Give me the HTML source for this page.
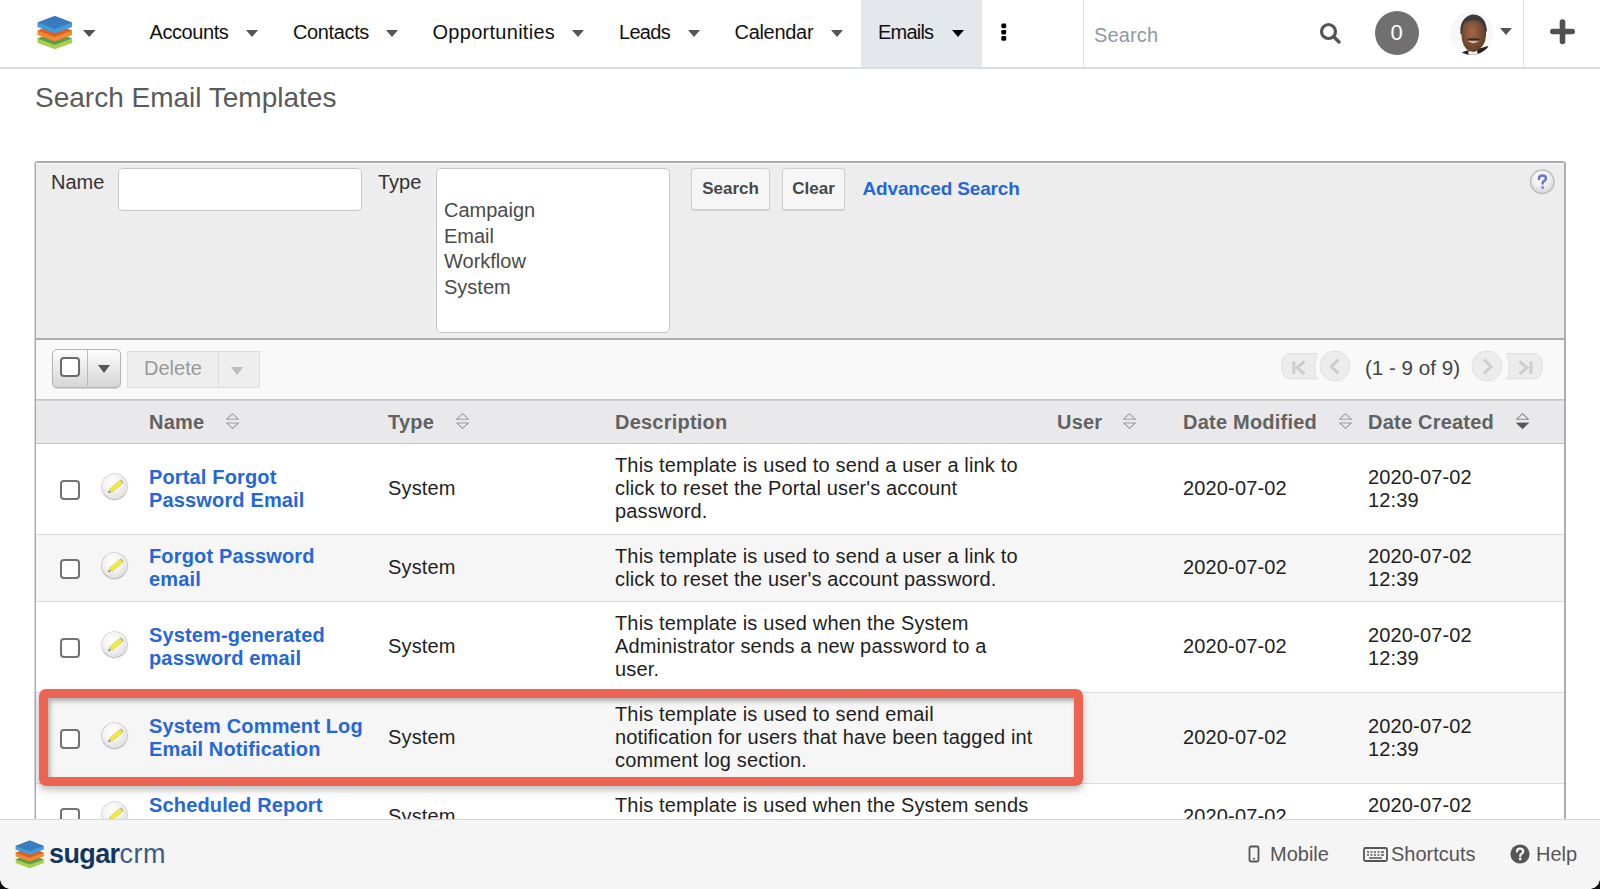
<!DOCTYPE html>
<html><head><meta charset="utf-8">
<style>
*{box-sizing:border-box}
html,body{margin:0;padding:0}
body{width:1600px;height:889px;overflow:hidden;position:relative;background:#fff;font-family:"Liberation Sans",sans-serif;color:#000}
.a{position:absolute;white-space:nowrap}
.nav{position:absolute;left:0;top:0;width:1600px;height:69px;background:#fff;border-bottom:2px solid #d7dde2}
.ni{position:absolute;top:21px;font-size:20px;color:#111;line-height:23px}
.car{position:absolute;width:0;height:0;border-left:6.5px solid transparent;border-right:6.5px solid transparent;border-top:7px solid #555}
.title{left:35px;top:81px;font-size:28px;color:#5a5a5a;line-height:34px}
.panel{position:absolute;left:35px;top:161px;width:1531px;height:760px;border:1px solid #ababab;border-right:2px solid #adadad;border-radius:3px 3px 0 0;background:#fff;overflow:hidden;box-shadow:-1px 0 0 #d8d8d8}
.search{position:absolute;left:0;top:0;width:1529px;height:178px;background:#ededed;border-bottom:2px solid #adadad;box-shadow:inset 0 1px 0 #acacac,inset 0 2px 0 #fafafa}
.lbl{font-size:20px;color:#333;line-height:22px}
.inp{position:absolute;background:#fff;border:1px solid #c6c6c6;border-radius:5px}
.btn{position:absolute;background:#f6f6f6;border:1px solid #cfcfcf;border-radius:3px;font-weight:bold;font-size:17px;color:#484848;text-align:center;line-height:40px;box-shadow:0 1px 1px rgba(0,0,0,.12)}
.link{color:#2567d8;font-weight:bold}
.opt{font-size:20px;line-height:25.7px;color:#4a4a4a}
.bar{position:absolute;left:0;top:178px;width:1529px;height:60px;background:#f9f9f9;border-bottom:1px solid #c4c4c4}
.bar .car{position:absolute}
.cbg{position:absolute;left:16px;top:9px;width:69px;height:39px;border:1px solid #b3b3b3;border-radius:5px;background:linear-gradient(#fdfdfd,#d6d6d6);box-shadow:0 1px 1px rgba(0,0,0,.15)}
.cbx{position:absolute;left:7px;top:7px;width:20px;height:20px;border:2px solid #6a6a6a;border-radius:4px;background:#fff}
.cdiv{position:absolute;left:34px;top:0;width:1px;height:36px;background:#b9b9b9}
.del{position:absolute;left:91px;top:11px;width:133px;height:37px;border:1px solid #dedede;background:#eeeeee}
.del span{position:absolute;left:16px;top:5px;font-size:20px;line-height:22px;color:#999}
.ddiv{position:absolute;left:90px;top:0;width:1px;height:35px;background:#dcdcdc}
.thead{position:absolute;left:0;top:238px;width:1529px;height:44px;background:#e9e9eb;border-top:1px solid #d0d0d0;border-bottom:1px solid #c6c6c6}
.th{position:absolute;top:10px;font-size:20px;font-weight:bold;color:#626262;line-height:22px;letter-spacing:0.22px}
.si{position:absolute;top:12px;width:14px;height:18px}
.row{position:absolute;left:0;width:1529px;border-bottom:1px solid #dcdcdc}
.rcb{position:absolute;left:24px;top:50%;margin-top:-9px;width:20px;height:20px;border:2px solid #727272;border-radius:4px;background:#fff}
.pen{position:absolute;left:66px;top:50%;margin-top:-15.5px;width:25px;height:25px;border-radius:50%;background:radial-gradient(circle at 42% 35%,#fff 0,#f3f3f3 40%,#d2d2d2 100%);box-shadow:0 0 1px 0.5px rgba(0,0,0,.28),0 1px 2px rgba(0,0,0,.2)}
.pen svg{position:absolute;left:0;top:0}
.c{position:absolute;top:50%;transform:translateY(calc(-50% - 0.5px));font-size:20px;line-height:23px;letter-spacing:0.15px}
.nm{color:#2567d8;font-weight:bold}
.tx{color:#1e1e1e}
.foot{position:absolute;left:0;top:819px;width:1600px;height:70px;background:#f5f5f5;border-top:1px solid #d6d6d6}
.fl{top:22px;font-size:20px;line-height:24px;color:#555}
</style></head><body>

<div class="nav">
  <svg class="a" style="left:0;top:0" width="100" height="67" viewBox="0 0 100 67">
    <g><polygon points="54.75,32 72,38.6 72,42.9 54.75,49.3 37.5,42.9 37.5,38.6" fill="#a8cf4f"/><polygon points="54.75,32 72,38.6 54.75,45 37.5,38.6" fill="#5f9c48"/><polygon points="54.75,24 72,30.6 72,34.9 54.75,41.3 37.5,34.9 37.5,30.6" fill="#f0892f"/><polygon points="54.75,24 72,30.6 54.75,37 37.5,30.6" fill="#dd5f24"/><polygon points="54.75,16 72,22.6 72,26.900000000000002 54.75,33.3 37.5,26.900000000000002 37.5,22.6" fill="#3f9ddc"/><polygon points="54.75,16 72,22.6 54.75,29 37.5,22.6" fill="#3a7bbd"/></g>
    <polygon points="83,30 95.5,30 89.2,37" fill="#505050"/>
  </svg>
  <div class="ni" style="left:149.5px;letter-spacing:-0.43px">Accounts</div><div class="car" style="left:245.5px;top:30px"></div>
  <div class="ni" style="left:293px;letter-spacing:-0.37px">Contacts</div><div class="car" style="left:386px;top:30px"></div>
  <div class="ni" style="left:432.5px;letter-spacing:0.28px">Opportunities</div><div class="car" style="left:572px;top:30px"></div>
  <div class="ni" style="left:619px;letter-spacing:-0.7px">Leads</div><div class="car" style="left:688px;top:30px"></div>
  <div class="ni" style="left:734.5px;letter-spacing:-0.3px">Calendar</div><div class="car" style="left:831px;top:30px"></div>
  <div class="a" style="left:861px;top:0;width:121px;height:67px;background:#e4e7eb"></div>
  <div class="ni" style="left:878px;letter-spacing:-0.78px">Emails</div><div class="car" style="left:951.5px;top:30px;border-top-color:#000"></div>
  <svg class="a" style="left:998px;top:22px" width="12" height="20" viewBox="0 0 12 20">
    <rect x="3.3" y="1.6" width="4.9" height="4.6" rx="1.4" fill="#000"/>
    <rect x="3.3" y="7.9" width="4.9" height="4.6" rx="1.4" fill="#000"/>
    <rect x="3.3" y="14.1" width="4.9" height="4.6" rx="1.4" fill="#000"/>
  </svg>
  <div class="a" style="left:1083px;top:0;width:1px;height:67px;background:#e2e5e8"></div>
  <div class="a" style="left:1094px;top:24px;font-size:20px;color:#8e99a3;line-height:22px;letter-spacing:0.15px">Search</div>
  <svg class="a" style="left:1310px;top:14px" width="40" height="40" viewBox="0 0 40 40">
    <circle cx="18.5" cy="17.5" r="7" fill="none" stroke="#555" stroke-width="3.2"/>
    <line x1="23.5" y1="22.5" x2="29" y2="28" stroke="#555" stroke-width="3.4" stroke-linecap="round"/>
  </svg>
  <div class="a" style="left:1374.5px;top:11px;width:44px;height:44px;border-radius:50%;background:#707070;color:#fff;font-size:22px;text-align:center;line-height:44px">0</div>
  <svg class="a" style="left:1448px;top:10px" width="48" height="48" viewBox="0 0 48 48">
    <defs><clipPath id="av"><circle cx="23.6" cy="23.3" r="21.5"/></clipPath>
    <radialGradient id="fc" cx="45%" cy="45%" r="60%"><stop offset="0" stop-color="#a0694a"/><stop offset="1" stop-color="#5e3a26"/></radialGradient></defs>
    <g clip-path="url(#av)">
      <rect width="48" height="48" fill="#f7f7f7"/>
      <path d="M8 48 Q14 40 24 40 Q34 38 40 36 L46 48Z" fill="#222"/>
      <path d="M20 42 Q24 38 29 39 L30 48 L22 48Z" fill="#eee"/>
      <path d="M13 22 Q12 9 24 6 Q36 5 38 18 L38 26 Q37 38 26 42 Q16 41 14 30Z" fill="url(#fc)"/>
      <path d="M12.5 24 Q11 8 24 4.5 Q37 4 39 20 L37.5 24 Q36 13 30 11 Q22 9 16 13 Q14 17 14 24Z" fill="#3b3b3b"/>
      <path d="M19 30 Q25 36 32 30 Q26 33 19 30Z" fill="#f4efe8"/>
      <path d="M19 29.5 Q25 27 32 29.5 L31 30.5 Q25 29 20 30.5Z" fill="#2a2a2a"/>
    </g>
  </svg>
  <div class="car" style="left:1499.5px;top:28px"></div>
  <div class="a" style="left:1523px;top:0;width:1px;height:67px;background:#e2e5e8"></div>
  <svg class="a" style="left:1545px;top:14px" width="36" height="36" viewBox="0 0 36 36">
    <line x1="17.5" y1="8" x2="17.5" y2="27.5" stroke="#505050" stroke-width="5.6" stroke-linecap="round"/>
    <line x1="7.8" y1="17.5" x2="27.2" y2="17.5" stroke="#505050" stroke-width="5.6" stroke-linecap="round"/>
  </svg>
</div>

<div class="a title">Search Email Templates</div>

<div class="panel">
  <div class="search">
    <div class="a lbl" style="left:15px;top:9px">Name</div>
    <div class="inp" style="left:82px;top:6px;width:244px;height:43px"></div>
    <div class="a lbl" style="left:342px;top:9px">Type</div>
    <div class="inp" style="left:400px;top:6px;width:234px;height:165px"></div>
    <div class="a opt" style="left:408px;top:36px">Campaign<br>Email<br>Workflow<br>System</div>
    <div class="btn" style="left:655px;top:6px;width:79px;height:42px">Search</div>
    <div class="btn" style="left:746px;top:6px;width:63px;height:42px">Clear</div>
    <div class="a link" style="left:826.5px;top:16px;font-size:19px;line-height:22px;letter-spacing:-0.15px">Advanced Search</div>
    <svg class="a" style="left:1490px;top:4px" width="32" height="32" viewBox="0 0 32 32">
      <defs><radialGradient id="hg" cx="45%" cy="35%" r="65%"><stop offset="0" stop-color="#fff"/><stop offset="0.5" stop-color="#f2f2f2"/><stop offset="1" stop-color="#d4d4d4"/></radialGradient></defs>
      <circle cx="16.3" cy="15.8" r="11.8" fill="url(#hg)" stroke="#b8b8b8" stroke-width="1.3"/>
      <path d="M12.9 12.9 Q12.9 9.6 16.4 9.6 Q19.9 9.6 19.9 12.4 Q19.9 14.1 17.9 15.2 Q16.6 15.9 16.6 17.4" fill="none" stroke="#6274e0" stroke-width="2.5" stroke-linecap="round"/>
      <rect x="15.1" y="20" width="3" height="2.9" rx="0.9" fill="#8597f4"/>
    </svg>
  </div>
  <div class="bar">
    <div class="cbg"><div class="cbx"></div><div class="cdiv"></div><div class="car" style="left:45px;top:14.5px;border-left-width:6.6px;border-right-width:6.6px;border-top-width:8px;border-top-color:#555"></div></div>
    <div class="del"><span>Delete</span><div class="ddiv"></div><div class="car" style="left:103px;top:14.5px;border-left-width:6.8px;border-right-width:6.8px;border-top-width:8px;border-top-color:#bdbdbd"></div></div>
    <svg class="a" style="left:1244px;top:9px" width="270" height="36" viewBox="0 0 270 36">
      <path d="M11 4.5 H37 Q32.5 17 37 29.8 H11 Q1.5 29.8 1.5 17 Q1.5 4.5 11 4.5Z" fill="#ececec" stroke="#e0e0e0" stroke-width="1"/>
      <path d="M13.8 12.5 V25 M24.5 12.5 L17 18.7 L24.5 25" fill="none" stroke="#cdcdcd" stroke-width="3"/>
      <circle cx="55" cy="17" r="15" fill="#ececec" stroke="#e0e0e0" stroke-width="1"/>
      <path d="M58.5 10.5 L51.5 17.5 L58.5 24.5" fill="none" stroke="#cdcdcd" stroke-width="3"/>
      <circle cx="207" cy="17" r="15" fill="#ececec" stroke="#e0e0e0" stroke-width="1"/>
      <path d="M204 10.5 L211 17.5 L204 24.5" fill="none" stroke="#cdcdcd" stroke-width="3"/>
      <path d="M253 4.5 H227 Q231.5 17 227 29.8 H253 Q262.5 29.8 262.5 17 Q262.5 4.5 253 4.5Z" fill="#ececec" stroke="#e0e0e0" stroke-width="1"/>
      <path d="M239.5 12.5 L247 18.7 L239.5 25 M251 12.5 V25" fill="none" stroke="#cdcdcd" stroke-width="3"/>
    </svg>
    <div class="a" style="left:1329px;top:16px;font-size:20.6px;line-height:23px;color:#444">(1 - 9 of 9)</div>
  </div>
  <div class="thead">
    <div class="th" style="left:113px">Name</div><svg class="si" style="left:190px"><path d="M6.5 0.7 L12.3 6.2 H0.7Z" fill="none" stroke="#a0a0a0" stroke-width="1.1"/><path d="M0.7 10 H12.3 L6.5 15.5Z" fill="none" stroke="#a0a0a0" stroke-width="1.1"/></svg>
    <div class="th" style="left:352px">Type</div><svg class="si" style="left:420px"><path d="M6.5 0.7 L12.3 6.2 H0.7Z" fill="none" stroke="#a0a0a0" stroke-width="1.1"/><path d="M0.7 10 H12.3 L6.5 15.5Z" fill="none" stroke="#a0a0a0" stroke-width="1.1"/></svg>
    <div class="th" style="left:579px">Description</div>
    <div class="th" style="left:1021px">User</div><svg class="si" style="left:1087px"><path d="M6.5 0.7 L12.3 6.2 H0.7Z" fill="none" stroke="#a0a0a0" stroke-width="1.1"/><path d="M0.7 10 H12.3 L6.5 15.5Z" fill="none" stroke="#a0a0a0" stroke-width="1.1"/></svg>
    <div class="th" style="left:1147px">Date Modified</div><svg class="si" style="left:1303px"><path d="M6.5 0.7 L12.3 6.2 H0.7Z" fill="none" stroke="#a0a0a0" stroke-width="1.1"/><path d="M0.7 10 H12.3 L6.5 15.5Z" fill="none" stroke="#a0a0a0" stroke-width="1.1"/></svg>
    <div class="th" style="left:1332px">Date Created</div><svg class="si" style="left:1480px"><path d="M6.5 0.7 L12.3 6.2 H0.7Z" fill="none" stroke="#8a8a8a" stroke-width="1.1"/><path d="M0.5 10 H12.5 L6.5 15.7Z" fill="#555" stroke="#555" stroke-width="0.8"/></svg>
  </div>
  <div class="row" style="top:282px;height:91px;background:#fff">
    <div class="rcb"></div><div class="pen"><svg width="25" height="25" viewBox="0 0 25 25"><path d="M7.46 15.1 L18.36 6.0 L21.04 9.2 L10.14 18.3Z" fill="#f2ea40" stroke="#c4bd3c" stroke-width="0.5"/><path d="M7.46 15.1 L10.14 18.3 L6.3 18.9Z" fill="#cfc98a"/><path d="M6.3 18.9 L7.0 16.9 L8.3 18.5Z" fill="#555"/><path d="M18.36 6.0 L18.97 5.5 L21.65 8.7 L21.04 9.2Z" fill="#9d9a70"/></svg></div>
    <div class="c nm" style="left:113px">Portal Forgot<br>Password Email</div>
    <div class="c tx" style="left:352px">System</div>
    <div class="c tx" style="left:579px">This template is used to send a user a link to<br>click to reset the Portal user's account<br>password.</div>
    <div class="c tx" style="left:1147px">2020-07-02</div>
    <div class="c tx" style="left:1332px">2020-07-02<br>12:39</div>
  </div>
  <div class="row" style="top:373px;height:67px;background:#f6f6f6">
    <div class="rcb"></div><div class="pen"><svg width="25" height="25" viewBox="0 0 25 25"><path d="M7.46 15.1 L18.36 6.0 L21.04 9.2 L10.14 18.3Z" fill="#f2ea40" stroke="#c4bd3c" stroke-width="0.5"/><path d="M7.46 15.1 L10.14 18.3 L6.3 18.9Z" fill="#cfc98a"/><path d="M6.3 18.9 L7.0 16.9 L8.3 18.5Z" fill="#555"/><path d="M18.36 6.0 L18.97 5.5 L21.65 8.7 L21.04 9.2Z" fill="#9d9a70"/></svg></div>
    <div class="c nm" style="left:113px">Forgot Password<br>email</div>
    <div class="c tx" style="left:352px">System</div>
    <div class="c tx" style="left:579px">This template is used to send a user a link to<br>click to reset the user's account password.</div>
    <div class="c tx" style="left:1147px">2020-07-02</div>
    <div class="c tx" style="left:1332px">2020-07-02<br>12:39</div>
  </div>
  <div class="row" style="top:440px;height:91px;background:#fff">
    <div class="rcb"></div><div class="pen"><svg width="25" height="25" viewBox="0 0 25 25"><path d="M7.46 15.1 L18.36 6.0 L21.04 9.2 L10.14 18.3Z" fill="#f2ea40" stroke="#c4bd3c" stroke-width="0.5"/><path d="M7.46 15.1 L10.14 18.3 L6.3 18.9Z" fill="#cfc98a"/><path d="M6.3 18.9 L7.0 16.9 L8.3 18.5Z" fill="#555"/><path d="M18.36 6.0 L18.97 5.5 L21.65 8.7 L21.04 9.2Z" fill="#9d9a70"/></svg></div>
    <div class="c nm" style="left:113px">System-generated<br>password email</div>
    <div class="c tx" style="left:352px">System</div>
    <div class="c tx" style="left:579px">This template is used when the System<br>Administrator sends a new password to a<br>user.</div>
    <div class="c tx" style="left:1147px">2020-07-02</div>
    <div class="c tx" style="left:1332px">2020-07-02<br>12:39</div>
  </div>
  <div class="row" style="top:531px;height:91px;background:#f6f6f6">
    <div class="rcb"></div><div class="pen"><svg width="25" height="25" viewBox="0 0 25 25"><path d="M7.46 15.1 L18.36 6.0 L21.04 9.2 L10.14 18.3Z" fill="#f2ea40" stroke="#c4bd3c" stroke-width="0.5"/><path d="M7.46 15.1 L10.14 18.3 L6.3 18.9Z" fill="#cfc98a"/><path d="M6.3 18.9 L7.0 16.9 L8.3 18.5Z" fill="#555"/><path d="M18.36 6.0 L18.97 5.5 L21.65 8.7 L21.04 9.2Z" fill="#9d9a70"/></svg></div>
    <div class="c nm" style="left:113px">System Comment Log<br>Email Notification</div>
    <div class="c tx" style="left:352px">System</div>
    <div class="c tx" style="left:579px">This template is used to send email<br>notification for users that have been tagged int<br>comment log section.</div>
    <div class="c tx" style="left:1147px">2020-07-02</div>
    <div class="c tx" style="left:1332px">2020-07-02<br>12:39</div>
  </div>
  <div class="row" style="top:622px;height:67px;background:#fff">
    <div class="rcb"></div><div class="pen"><svg width="25" height="25" viewBox="0 0 25 25"><path d="M7.46 15.1 L18.36 6.0 L21.04 9.2 L10.14 18.3Z" fill="#f2ea40" stroke="#c4bd3c" stroke-width="0.5"/><path d="M7.46 15.1 L10.14 18.3 L6.3 18.9Z" fill="#cfc98a"/><path d="M6.3 18.9 L7.0 16.9 L8.3 18.5Z" fill="#555"/><path d="M18.36 6.0 L18.97 5.5 L21.65 8.7 L21.04 9.2Z" fill="#9d9a70"/></svg></div>
    <div class="c nm" style="left:113px">Scheduled Report<br>Email</div>
    <div class="c tx" style="left:352px">System</div>
    <div class="c tx" style="left:579px">This template is used when the System sends<br>a scheduled report to users.</div>
    <div class="c tx" style="left:1147px">2020-07-02</div>
    <div class="c tx" style="left:1332px">2020-07-02<br>12:39</div>
  </div>
</div>

<div class="a" style="left:39px;top:689px;width:1044px;height:97px;border:9.5px solid #ec6352;border-radius:7px;box-shadow:inset 2px 3px 5px rgba(0,0,0,.3),0 4px 7px rgba(0,0,0,.25)"></div>
<div class="foot">
  <svg class="a" style="left:0;top:-1px" width="180" height="70" viewBox="0 0 180 70">
    <polygon points="29.7,35 43.8,40.4 43.8,44.0 29.7,49.2 15.6,44.0 15.6,40.4" fill="#a8cf4f"/><polygon points="29.7,35 43.8,40.4 29.7,45.6 15.6,40.4" fill="#5f9c48"/><polygon points="29.7,28.3 43.8,33.7 43.8,37.300000000000004 29.7,42.5 15.6,37.300000000000004 15.6,33.7" fill="#f0892f"/><polygon points="29.7,28.3 43.8,33.7 29.7,38.9 15.6,33.7" fill="#dd5f24"/><polygon points="29.7,21.6 43.8,27.0 43.8,30.6 29.7,35.800000000000004 15.6,30.6 15.6,27.0" fill="#3f9ddc"/><polygon points="29.7,21.6 43.8,27.0 29.7,32.2 15.6,27.0" fill="#3a7bbd"/>
  </svg>
  <div class="a" style="left:49px;top:18.5px;font-size:27px;line-height:30px;color:#153561;font-weight:bold;letter-spacing:-0.6px">sugar<span style="font-weight:normal;color:#3a5c87;letter-spacing:0.5px">crm</span></div>
  <svg class="a" style="left:1246px;top:25px" width="16" height="18" viewBox="0 0 16 18"><rect x="3.5" y="1.5" width="9" height="15" rx="1.5" fill="none" stroke="#555" stroke-width="1.8"/><rect x="7" y="13" width="2" height="1.5" fill="#555"/></svg>
  <div class="a fl" style="left:1270px">Mobile</div>
  <svg class="a" style="left:1362px;top:26px" width="28" height="17" viewBox="0 0 28 17"><rect x="2" y="2" width="23" height="13" rx="1.5" fill="none" stroke="#555" stroke-width="1.8"/><path d="M5 6h2M8.5 6h2M12 6h2M15.5 6h2M19 6h3M5 9h2M8.5 9h2M12 9h2M15.5 9h2M19 9h3M7 12h13" stroke="#555" stroke-width="1.5"/></svg>
  <div class="a fl" style="left:1391px">Shortcuts</div>
  <svg class="a" style="left:1509px;top:23px" width="22" height="22" viewBox="0 0 22 22"><circle cx="11" cy="11" r="9.6" fill="#555"/><path d="M8 8.6 Q8 5.6 11 5.6 Q14.2 5.6 14.2 8.3 Q14.2 9.9 12.4 10.9 Q11.2 11.6 11.2 13" fill="none" stroke="#f5f5f5" stroke-width="2.3" stroke-linecap="round"/><circle cx="11.2" cy="16" r="1.4" fill="#f5f5f5"/></svg>
  <div class="a fl" style="left:1536px">Help</div>
</div>
<div class="a" style="left:0;top:879px;width:10px;height:10px;background:radial-gradient(circle at 100% 0,transparent 9.5px,#111 10px)"></div>
<div class="a" style="left:1590px;top:879px;width:10px;height:10px;background:radial-gradient(circle at 0 0,transparent 9.5px,#111 10px)"></div>
</body></html>
